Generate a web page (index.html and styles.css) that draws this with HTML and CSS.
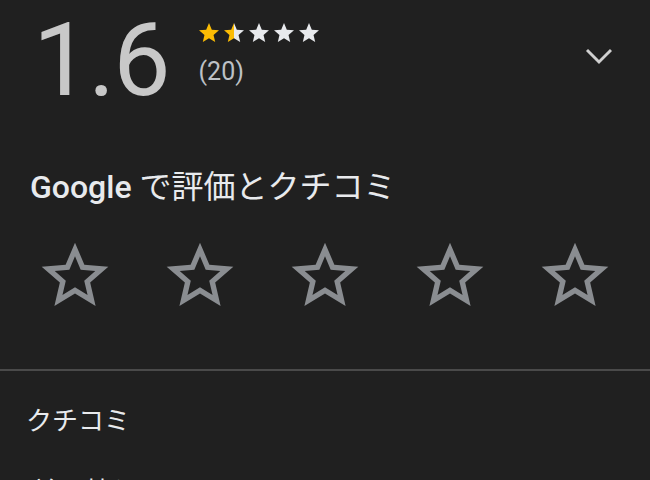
FILE: index.html
```html
<!DOCTYPE html>
<html lang="ja">
<head>
  <meta charset="UTF-8">
  <title>クチコミ</title>
  <link rel="stylesheet" href="styles.css">
</head>
<body>

  <div class="summary">
    <div class="score">1.6</div>
    <div class="meta">
      <div class="mini-stars">
        <svg viewBox="0 0 24 24"><path class="on" d="M12 17.27L18.18 21l-1.64-7.03L22 9.24l-7.19-.61L12 2 9.19 8.63 2 9.24l5.46 4.73L5.82 21z"/></svg>
        <svg viewBox="0 0 24 24">
          <defs>
            <linearGradient id="half">
              <stop offset="50%" stop-color="#fbbc04"/>
              <stop offset="50%" stop-color="#e8eaed"/>
            </linearGradient>
          </defs>
          <path fill="url(#half)" d="M12 17.27L18.18 21l-1.64-7.03L22 9.24l-7.19-.61L12 2 9.19 8.63 2 9.24l5.46 4.73L5.82 21z"/>
        </svg>
        <svg viewBox="0 0 24 24"><path class="off" d="M12 17.27L18.18 21l-1.64-7.03L22 9.24l-7.19-.61L12 2 9.19 8.63 2 9.24l5.46 4.73L5.82 21z"/></svg>
        <svg viewBox="0 0 24 24"><path class="off" d="M12 17.27L18.18 21l-1.64-7.03L22 9.24l-7.19-.61L12 2 9.19 8.63 2 9.24l5.46 4.73L5.82 21z"/></svg>
        <svg viewBox="0 0 24 24"><path class="off" d="M12 17.27L18.18 21l-1.64-7.03L22 9.24l-7.19-.61L12 2 9.19 8.63 2 9.24l5.46 4.73L5.82 21z"/></svg>
      </div>
      <div class="count">(20)</div>
    </div>
    <button class="expand">
      <svg viewBox="0 0 24 24"><polyline points="4,8 12,16 20,8"/></svg>
    </button>
  </div>

  <h2 class="rate-title"><span class="brand">Google</span> で評価とクチコミ</h2>

  <div class="rate-stars">
    <svg viewBox="0 0 24 24"><path d="M22 9.24l-7.19-.62L12 2 9.19 8.63 2 9.24l5.46 4.73L5.82 21 12 17.27 18.18 21l-1.63-7.03L22 9.24zM12 15.4l-3.76 2.27 1-4.28-3.32-2.88 4.38-.38L12 6.1l1.71 4.04 4.38.38-3.32 2.88 1 4.28L12 15.4z"/></svg>
    <svg viewBox="0 0 24 24"><path d="M22 9.24l-7.19-.62L12 2 9.19 8.63 2 9.24l5.46 4.73L5.82 21 12 17.27 18.18 21l-1.63-7.03L22 9.24zM12 15.4l-3.76 2.27 1-4.28-3.32-2.88 4.38-.38L12 6.1l1.71 4.04 4.38.38-3.32 2.88 1 4.28L12 15.4z"/></svg>
    <svg viewBox="0 0 24 24"><path d="M22 9.24l-7.19-.62L12 2 9.19 8.63 2 9.24l5.46 4.73L5.82 21 12 17.27 18.18 21l-1.63-7.03L22 9.24zM12 15.4l-3.76 2.27 1-4.28-3.32-2.88 4.38-.38L12 6.1l1.71 4.04 4.38.38-3.32 2.88 1 4.28L12 15.4z"/></svg>
    <svg viewBox="0 0 24 24"><path d="M22 9.24l-7.19-.62L12 2 9.19 8.63 2 9.24l5.46 4.73L5.82 21 12 17.27 18.18 21l-1.63-7.03L22 9.24zM12 15.4l-3.76 2.27 1-4.28-3.32-2.88 4.38-.38L12 6.1l1.71 4.04 4.38.38-3.32 2.88 1 4.28L12 15.4z"/></svg>
    <svg viewBox="0 0 24 24"><path d="M22 9.24l-7.19-.62L12 2 9.19 8.63 2 9.24l5.46 4.73L5.82 21 12 17.27 18.18 21l-1.63-7.03L22 9.24zM12 15.4l-3.76 2.27 1-4.28-3.32-2.88 4.38-.38L12 6.1l1.71 4.04 4.38.38-3.32 2.88 1 4.28L12 15.4z"/></svg>
  </div>

  <hr class="divider">

  <h2 class="reviews-title">クチコミ</h2>
  <div class="sort">並べ替え</div>

</body>
</html>
```

FILE: styles.css
```css
body {
  background-color: #202020;
  font-family: Roboto, "Noto Sans CJK JP", sans-serif;
  color: #e8eaed;
  margin: 0;
  overflow: hidden;
}

.summary {
  display: flex;
  align-items: flex-start;
  padding: 9px 33px 0 33px;
}

.score {
  font-size: 102px;
  font-weight: 400;
  line-height: 1;
  color: #c8c8c8;
  letter-spacing: -2px;
}

.meta {
  margin-left: 28px;
  padding-top: 12px;
}

.mini-stars {
  display: flex;
  gap: 1px;
}

.mini-stars svg {
  width: 24px;
  height: 24px;
}

.on {
  fill: #fbbc04;
}

.off {
  fill: #e8eaed;
}

.count {
  margin-top: 12px;
  padding-left: 2px;
  font-size: 25px;
  color: #bdc1c6;
}

.expand {
  margin-left: auto;
  margin-top: 29px;
  background: none;
  border: none;
  padding: 0;
  width: 36px;
  height: 36px;
}

.expand svg {
  width: 36px;
  height: 36px;
  fill: none;
  stroke: #cfcfcf;
  stroke-width: 1.9;
}

.rate-title {
  margin: 50px 0 0 30px;
  font-size: 32px;
  font-weight: 400;
  color: #e8eaed;
}

.brand {
  font-weight: 500;
}

.rate-stars {
  display: flex;
  gap: 45px;
  padding-left: 35px;
  margin-top: 29px;
}

.rate-stars svg {
  width: 80px;
  height: 80px;
  fill: #8a8d91;
}

.divider {
  border: none;
  border-top: 2px solid #4a4a4a;
  margin: 53px 0 0;
}

.reviews-title {
  margin: 29px 0 0 26px;
  font-size: 26px;
  font-weight: 400;
}

.sort {
  margin: 34px 0 0 32px;
  font-size: 26px;
}
```
